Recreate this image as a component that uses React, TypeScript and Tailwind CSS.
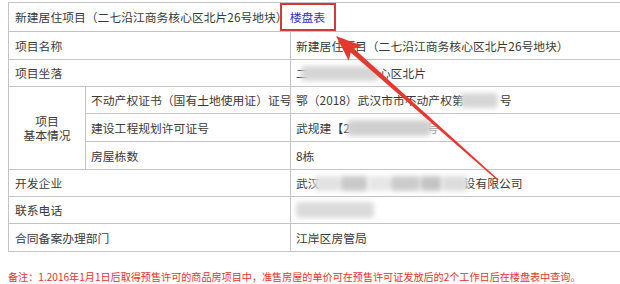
import React from 'react';

// Redaction smudge used where the screenshot had blurred-out text
function Smudge({ w, h = 15, tone = 'bg-[#d6d6d6]', className = '' }: { w: number; h?: number; tone?: string; className?: string }) {
    return (
        <span
            className={`inline-block align-middle rounded-[4px] blur-[2.5px] ${tone} ${className}`}
            style={{ width: w, height: h }}
        />
    );
}

const cell = 'flex items-center border-b border-r border-[#c4c4c4] pl-[5px] whitespace-nowrap overflow-hidden';

export default function App() {
    return (
        <div
            className="relative w-[620px] h-[284px] overflow-hidden bg-white pt-[2px] pl-[8px] text-[11.8px] leading-none text-[#3a3a3a]"
            style={{ fontFamily: '"Noto Sans CJK SC", "Noto Sans", sans-serif' }}
        >
            {/* Table */}
            <div className="grid w-[660px] grid-cols-[77px_205px_1fr] grid-rows-[29px_28px_27px_27px_28px_28px_27px_27px_28px] border-t border-l border-[#c4c4c4]">
                {/* Title row */}
                <div className={`${cell} col-span-3 pl-[6px]`}>
                    <span>新建居住项目（二七沿江商务核心区北片26号地块）</span>
                    <span className="relative ml-[2px] text-[#3434c8]">
                        楼盘表
                        <span className="absolute -left-[10px] -right-[11px] -top-[8px] -bottom-[8px] border-2 border-[#cf3a3a]" />
                    </span>
                </div>

                <div className={`${cell} col-span-2 pl-[6px]`}>项目名称</div>
                <div className={cell}>新建居住项目（二七沿江商务核心区北片26号地块）</div>

                <div className={`${cell} col-span-2 pl-[6px]`}>项目坐落</div>
                <div className={cell}>
                    <span>二</span>
                    <Smudge w={78} className="-ml-[7px]" />
                    <span>心区北片</span>
                </div>

                <div className="row-span-3 flex items-center justify-center border-b border-r border-[#c4c4c4]">
                    <p className="text-center leading-[14px]">
                        项目
                        <br />
                        基本情况
                    </p>
                </div>
                <div className={cell}>不动产权证书（国有土地使用证）证号</div>
                <div className={cell}>
                    <span>鄂（2018）武汉市市不动产权第</span>
                    <Smudge w={38} className="-ml-[4px]" />
                    <span className="ml-[2px]">号</span>
                </div>

                <div className={cell}>建设工程规划许可证号</div>
                <div className={cell}>
                    <span>武规建【2</span>
                    <Smudge w={84} h={16} tone="bg-[#cfcfcf]" className="-ml-[3px]" />
                    <span className="-ml-[4px] text-[#9a9a9a]">号</span>
                </div>

                <div className={cell}>房屋栋数</div>
                <div className={cell}>8栋</div>

                <div className={`${cell} col-span-2 pl-[6px]`}>开发企业</div>
                <div className={cell}>
                    <span>武汉</span>
                    <span className="-ml-[6px] flex items-center">
                        <Smudge w={26} tone="bg-[#e2e2e2]" />
                        <Smudge w={28} tone="bg-[#c9c9c9]" />
                        <Smudge w={22} tone="bg-[#e6e6e6]" />
                        <Smudge w={30} tone="bg-[#cccccc]" />
                        <Smudge w={22} tone="bg-[#c4c4c4]" />
                        <Smudge w={26} tone="bg-[#dcdcdc]" />
                    </span>
                    <span className="-ml-[4px]">设有限公司</span>
                </div>

                <div className={`${cell} col-span-2 pl-[6px]`}>联系电话</div>
                <div className={cell}>
                    <Smudge w={78} h={16} tone="bg-[#dadada]" />
                </div>

                <div className={`${cell} col-span-2 pl-[6px]`}>合同备案办理部门</div>
                <div className={cell}>江岸区房管局</div>
            </div>

            {/* Note */}
            <p className="mt-[20px] whitespace-nowrap text-[10.1px] text-[#e2362c]">
                备注：1.2016年1月1日后取得预售许可的商品房项目中，准售房屋的单价可在预售许可证发放后的2个工作日后在楼盘表中查询。
            </p>

            {/* Red annotation arrow */}
            <svg className="pointer-events-none absolute left-0 top-0" width="620" height="284" viewBox="0 0 620 284">
                <polygon
                    points="336,36 362,45.8 354.1,48.7 498.5,179.5 497.5,180.5 350.7,52.5 348.8,60.8"
                    fill="#e5392f"
                />
            </svg>
        </div>
    );
}
